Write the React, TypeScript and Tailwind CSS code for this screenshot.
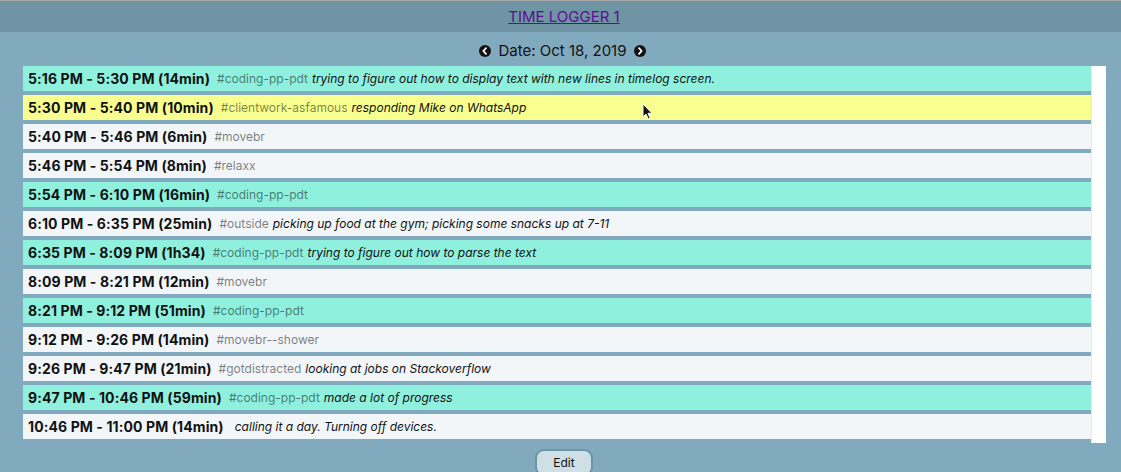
import React from "react";

type Entry = {
  time: string;
  tag: string;
  desc: string;
  color: "teal" | "yellow" | "white";
};

const entries: Entry[] = [
  { time: "5:16 PM - 5:30 PM (14min)", tag: "#coding-pp-pdt", desc: "trying to figure out how to display text with new lines in timelog screen.", color: "teal" },
  { time: "5:30 PM - 5:40 PM (10min)", tag: "#clientwork-asfamous", desc: "responding Mike on WhatsApp", color: "yellow" },
  { time: "5:40 PM - 5:46 PM (6min)", tag: "#movebr", desc: "", color: "white" },
  { time: "5:46 PM - 5:54 PM (8min)", tag: "#relaxx", desc: "", color: "white" },
  { time: "5:54 PM - 6:10 PM (16min)", tag: "#coding-pp-pdt", desc: "", color: "teal" },
  { time: "6:10 PM - 6:35 PM (25min)", tag: "#outside", desc: "picking up food at the gym; picking some snacks up at 7-11", color: "white" },
  { time: "6:35 PM - 8:09 PM (1h34)", tag: "#coding-pp-pdt", desc: "trying to figure out how to parse the text", color: "teal" },
  { time: "8:09 PM - 8:21 PM (12min)", tag: "#movebr", desc: "", color: "white" },
  { time: "8:21 PM - 9:12 PM (51min)", tag: "#coding-pp-pdt", desc: "", color: "teal" },
  { time: "9:12 PM - 9:26 PM (14min)", tag: "#movebr--shower", desc: "", color: "white" },
  { time: "9:26 PM - 9:47 PM (21min)", tag: "#gotdistracted", desc: "looking at jobs on Stackoverflow", color: "white" },
  { time: "9:47 PM - 10:46 PM (59min)", tag: "#coding-pp-pdt", desc: "made a lot of progress", color: "teal" },
  { time: "10:46 PM - 11:00 PM (14min)", tag: "", desc: "calling it a day. Turning off devices.", color: "white" },
];

const bg: Record<Entry["color"], string> = {
  teal: "bg-[#8ff0de]",
  yellow: "bg-[#f8ff8f]",
  white: "bg-[#f2f6f9]",
};

function CircleChevron({ dir }: { dir: "left" | "right" }) {
  return (
    <svg width="12" height="12" viewBox="0 0 12 12" className="block">
      <circle cx="6" cy="6" r="6" fill="#111" />
      {dir === "left" ? (
        <path d="M7 3.2 L4.3 6 L7 8.8" stroke="#fff" strokeWidth="1.8" fill="none" strokeLinecap="round" strokeLinejoin="round" />
      ) : (
        <path d="M5 3.2 L7.7 6 L5 8.8" stroke="#fff" strokeWidth="1.8" fill="none" strokeLinecap="round" strokeLinejoin="round" />
      )}
    </svg>
  );
}

export default function App() {
  return (
    <div
      className="relative w-[1121px] h-[472px] overflow-hidden bg-[#82aabf]"
      style={{ fontFamily: "Inter, 'Noto Sans', sans-serif" }}
    >
      <div className="h-[32px] bg-[#6f94a3] border-t border-[#a9a9a9] flex items-center justify-center pl-[7px]">
        <a href="#" className="text-[15px] text-[#5e0c96] underline leading-none">
          TIME LOGGER 1
        </a>
      </div>
      <div className="h-[34px] pt-[4px] pl-[4px] flex items-center justify-center gap-[7px] text-[15px] text-[#111]">
        <CircleChevron dir="left" />
        <span>Date: Oct 18, 2019</span>
        <CircleChevron dir="right" />
      </div>
      <div className="ml-[23px] mr-[15px] flex bg-white">
        <div className="flex-1 bg-[#82aabf]">
          {entries.map((e, i) => (
            <div
              key={i}
              className={`h-[25px] mb-[4px] flex items-center pl-[5px] whitespace-nowrap ${bg[e.color]}`}
            >
              <span className="font-bold text-[14px] tracking-[0.1px] text-[#111]">{e.time}</span>
              <span className="text-[12px] text-black/50 ml-[7px]">{e.tag}</span>
              {e.desc && (
                <span className="text-[12px] italic text-[#111] ml-[4px]">{e.desc}</span>
              )}
            </div>
          ))}
        </div>
        <div className="w-[15px] bg-white border-l border-[#e6e9ec]" />
      </div>
      <div className="flex justify-center mt-[6px] pl-[7px]">
        <button className="w-[58px] h-[27px] rounded-[9px] bg-[#cfdfe6] border-2 border-[#6c95a6] text-[12px] text-[#111] leading-none">
          Edit
        </button>
      </div>
      <svg
        className="absolute left-[642px] top-[103px]"
        width="12"
        height="18"
        viewBox="0 0 12 18"
      >
        <path d="M1 1 L1 14 L4 11 L6.3 16 L8.2 15.2 L6 10.3 L10 10.3 Z" fill="#111" stroke="#fff" strokeWidth="1" />
      </svg>
    </div>
  );
}
